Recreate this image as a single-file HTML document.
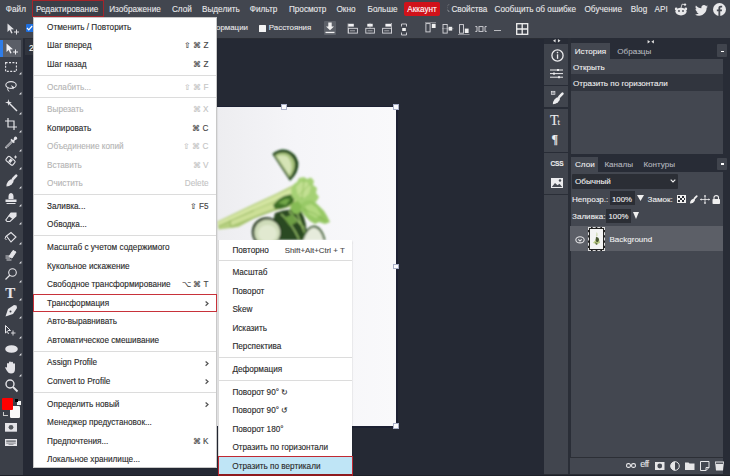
<!DOCTYPE html><html><head><meta charset="utf-8"><style>
*{margin:0;padding:0;box-sizing:border-box}
html,body{width:730px;height:476px;overflow:hidden;background:#252934;font-family:"Liberation Sans",sans-serif;position:relative}
.a{position:absolute}
.t{position:absolute;white-space:nowrap;line-height:1;-webkit-text-stroke:0.1px currentColor}
.mb{font-size:8.2px;color:#e8e8ea;-webkit-text-stroke:0.1px currentColor}
.menu{position:absolute;background:#fff;box-shadow:0.5px 0.5px 1.5px rgba(0,0,0,.18)}
.mi{position:relative;height:18.5px;line-height:18.5px;font-size:8.2px;color:#2a2a2a;-webkit-text-stroke:0.12px currentColor;padding-left:13.6px;white-space:nowrap}
.mi.d{color:#b4b4b4}
.mi .k{position:absolute;right:7px;top:0;color:#444}
.mi.d .k{color:#c4c4c4}
.sep{height:4.2px;position:relative}
.sep:after{content:"";position:absolute;left:0;right:0;top:0.4px;height:1px;background:#dcdcdc}
svg{position:absolute;overflow:visible}
.s2:after{top:0px}
</style></head><body>
<div class="a" style="left:0;top:0;width:730px;height:38px;background:#42464f"></div>
<div class="a" style="left:0;top:37.5px;width:730px;height:1px;background:#2a2d34"></div>
<div class="a" style="left:32px;top:0;width:72px;height:17px;border:1.3px solid #a3242a;border-top-width:1px;background:#3b3f48"></div>
<div class="t mb" style="left:5.8px;top:5.6px">Файл</div>
<div class="t mb" style="left:35.9px;top:5.6px">Редактирование</div>
<div class="t mb" style="left:109.2px;top:5.6px">Изображение</div>
<div class="t mb" style="left:171.9px;top:5.6px">Слой</div>
<div class="t mb" style="left:202px;top:5.6px">Выделить</div>
<div class="t mb" style="left:249.7px;top:5.6px">Фильтр</div>
<div class="t mb" style="left:288.9px;top:5.6px">Просмотр</div>
<div class="t mb" style="left:336.5px;top:5.6px">Окно</div>
<div class="t mb" style="left:367.6px;top:5.6px">Больше</div>
<div class="a" style="left:404.2px;top:2.4px;width:35.4px;height:13.7px;background:#d0121a;border-radius:2px"></div>
<div class="t mb" style="left:407.2px;top:5.6px;color:#fff">Аккаунт</div>
<svg style="left:445.5px;top:4.2px" width="4" height="8" viewBox="0 0 4 8"><path d="M3.8 0.2 A4 4 0 0 0 3.8 7.8 A2.6 3.8 0 0 1 3.8 0.2 Z" fill="#e8e8ea"/></svg>
<div class="t mb" style="left:451.4px;top:5.6px">Свойства</div>
<div class="t mb" style="left:494.5px;top:5.6px">Сообщить об ошибке</div>
<div class="t mb" style="left:584.5px;top:5.6px">Обучение</div>
<div class="t mb" style="left:630.8px;top:5.6px">Blog</div>
<div class="t mb" style="left:654.6px;top:5.6px">API</div>
<svg style="left:674px;top:3px" width="14" height="13" viewBox="0 0 14 13">
<ellipse cx="7" cy="8.6" rx="5.6" ry="3.8" fill="#e8e8ea"/>
<circle cx="2.2" cy="6" r="1.4" fill="#e8e8ea"/><circle cx="11.8" cy="6" r="1.4" fill="#e8e8ea"/>
<circle cx="11" cy="1.6" r="1.2" fill="#e8e8ea"/>
<path d="M7 5 L8 1.2 L11 1.6" stroke="#e8e8ea" stroke-width="0.8" fill="none"/>
<circle cx="5" cy="8" r="0.9" fill="#464a52"/><circle cx="9" cy="8" r="0.9" fill="#464a52"/>
</svg>
<svg style="left:694.5px;top:4.8px" width="13" height="11" viewBox="0 0 24 20">
<path fill="#e8e8ea" d="M24 2.4c-.9.4-1.8.6-2.8.8 1-.6 1.8-1.6 2.2-2.7-1 .6-2 1-3.1 1.2C19.4.7 18.1 0 16.6 0c-2.7 0-4.9 2.2-4.9 4.9 0 .4 0 .8.1 1.1C7.7 5.8 4.1 3.9 1.7.9c-.4.7-.7 1.6-.7 2.5 0 1.7.9 3.2 2.2 4.1-.8 0-1.6-.2-2.2-.6v.1c0 2.4 1.7 4.4 3.9 4.8-.4.1-.8.2-1.3.2-.3 0-.6 0-.9-.1.6 2 2.4 3.4 4.6 3.4-1.7 1.3-3.8 2.1-6.1 2.1-.4 0-.8 0-1.2-.1 2.2 1.4 4.8 2.2 7.5 2.2 9.1 0 14-7.5 14-14v-.6c1-.7 1.8-1.6 2.5-2.5z"/>
</svg>
<svg style="left:712.5px;top:3px" width="13" height="13" viewBox="0 0 24 24">
<circle cx="12" cy="12" r="12" fill="#e8e8ea"/>
<path fill="#464a52" d="M13.4 24v-8.6h2.9l.4-3.4h-3.3V9.9c0-1 .3-1.6 1.7-1.6h1.8v-3c-.3 0-1.4-.1-2.6-.1-2.6 0-4.3 1.6-4.3 4.4V12H7.1v3.4H10V24z"/>
</svg>
<svg style="left:7px;top:23px" width="13" height="12" viewBox="0 0 13 12">
<path d="M0.5 0.5 L0.5 9 L2.6 7 L4.3 10.6 L5.6 10 L4 6.5 L7 6.3 Z" fill="#e0e0e4"/>
<path d="M9.5 6.5 V11.5 M7 9 H12" stroke="#e0e0e4" stroke-width="1"/>
</svg>
<div class="a" style="left:25.5px;top:24px;width:8px;height:8px;background:#1e6fe0;border-radius:1px"></div>
<svg style="left:26px;top:25px" width="7" height="6" viewBox="0 0 7 6"><path d="M1 3 L2.8 4.8 L6.2 1" stroke="#fff" stroke-width="1.2" fill="none"/></svg>
<div class="t mb" style="left:148.8px;top:24.4px;font-size:7.9px">Элементы трансформации</div>
<div class="a" style="left:259px;top:25.3px;width:7px;height:7px;background:#f4f4f4;border-radius:0.5px"></div>
<div class="t mb" style="left:268.8px;top:24.4px;font-size:7.9px">Расстояния</div>
<div class="a" style="left:323.7px;top:20.7px;width:12.5px;height:14.4px;background:#5c6068;border-radius:1px"></div>
<svg style="left:325px;top:22px" width="10" height="12" viewBox="0 0 10 12">
<path d="M3.3 0.5 H6.7 V4.5 H9 L5 8.3 L1 4.5 H3.3 Z" fill="#f0f0f0"/><rect x="0.5" y="9.8" width="9" height="1.3" fill="#f0f0f0"/></svg>
<svg style="left:346.5px;top:22px" width="11" height="12" viewBox="0 0 11 12">
<rect x="1.2" y="1.8" width="5.6" height="2.8" fill="#f2f2f4"/><rect x="0.6" y="1.5" width="0.8" height="10" fill="#d8d8dc" opacity=".7"/>
<rect x="1.4" y="6.3" width="9" height="4.8" fill="none" stroke="#d8d8dc" stroke-width="0.9"/><rect x="3" y="8" width="5" height="1.4" fill="#d8d8dc" opacity=".45"/></svg>
<svg style="left:365.2px;top:22px" width="11" height="12" viewBox="0 0 11 12">
<rect x="2.3" y="1.8" width="5.4" height="2.8" fill="#f2f2f4"/><rect x="4.6" y="0.8" width="0.8" height="11" fill="#d8d8dc" opacity=".6"/>
<rect x="0.8" y="6.3" width="8.6" height="4.8" fill="#42464f" stroke="#d8d8dc" stroke-width="0.9"/><rect x="2.6" y="8" width="5" height="1.4" fill="#d8d8dc" opacity=".45"/></svg>
<svg style="left:382.4px;top:22px" width="11" height="12" viewBox="0 0 11 12">
<rect x="3.4" y="1.8" width="5.6" height="2.8" fill="#f2f2f4"/><rect x="9" y="1" width="0.9" height="10.5" fill="#d8d8dc" opacity=".8"/>
<rect x="0.6" y="6.3" width="8.8" height="4.8" fill="none" stroke="#d8d8dc" stroke-width="0.9"/><rect x="2.2" y="8" width="5" height="1.4" fill="#d8d8dc" opacity=".45"/></svg>
<svg style="left:401.2px;top:22.5px" width="6" height="13" viewBox="0 0 6 13">
<path d="M0.5 1 H5.5 M0.5 1 V3.5 M5.5 1 V3.5 M0.5 12 H5.5 M0.5 12 V9.5 M5.5 12 V9.5" stroke="#d8d8dc" stroke-width="0.9" fill="none"/><rect x="1.2" y="5" width="3.6" height="3" fill="#f0f0f0"/></svg>
<svg style="left:424.5px;top:22.3px" width="12" height="11" viewBox="0 0 12 11">
<rect x="0" y="0" width="11" height="0.8" fill="#d8d8dc" opacity=".55"/><rect x="0.9" y="1.6" width="4.2" height="8.3" fill="none" stroke="#d8d8dc" stroke-width=".9"/><rect x="6.8" y="1.8" width="3.8" height="4.2" fill="#f0f0f0"/></svg>
<svg style="left:441.5px;top:23.5px" width="12" height="10" viewBox="0 0 12 10">
<rect x="1" y="0.5" width="4.2" height="8.6" fill="none" stroke="#d8d8dc" stroke-width=".9"/><rect x="6.6" y="2.8" width="3.6" height="3.8" fill="#f0f0f0"/><rect x="0" y="4.3" width="11.5" height=".8" fill="#d8d8dc" opacity=".5"/></svg>
<svg style="left:458.3px;top:24px" width="12" height="11" viewBox="0 0 12 11">
<rect x="1.5" y="0.6" width="4" height="8.6" fill="none" stroke="#d8d8dc" stroke-width=".9"/><rect x="6.8" y="4.6" width="3.8" height="4.4" fill="#f0f0f0"/><rect x="0" y="10" width="11.5" height=".9" fill="#d8d8dc" opacity=".55"/></svg>
<svg style="left:475.2px;top:26px" width="12" height="6" viewBox="0 0 12 6">
<path d="M0.3 0.6 H2 V5.4 H0.3 M11.7 0.6 H10 V5.4 H11.7" stroke="#d8d8dc" stroke-width=".9" fill="none"/><rect x="4" y="0.6" width="4" height="4.8" fill="none" stroke="#d8d8dc" stroke-width=".9"/></svg>
<div class="a" style="left:494px;top:30px;width:6.5px;height:1px;background:#d8d8dc;opacity:.8"></div>
<svg style="left:516px;top:22.8px" width="12.5" height="12" viewBox="0 0 12.5 12">
<rect x="0.7" y="0.7" width="11" height="10.6" fill="none" stroke="#f0f0f0" stroke-width="1.3"/><path d="M6.2 0.7 V11.3 M0.7 6 H11.7" stroke="#f0f0f0" stroke-width="1.3"/></svg>
<div class="a" style="left:0;top:38px;width:22.8px;height:438px;background:#3b3f48"></div>
<div class="a" style="left:0;top:40px;width:3px;height:17px;background:#2f7de8"></div>
<div class="a" style="left:3px;top:40px;width:17.5px;height:17px;background:#5a5e67"></div>
<div class="a" style="left:24.8px;top:39.3px;width:10px;height:15.3px;background:#30343d"></div>
<div class="t" style="left:29px;top:43.6px;font-size:8.4px;color:#fff">2</div>
<div class="a" style="left:172px;top:107px;width:224px;height:319px;background:#f3f3f6"></div>
<div class="a" style="left:170.5px;top:105.5px;width:227px;height:322px;background:#1c2032"></div>
<svg style="left:172px;top:107px" width="224" height="319" viewBox="172 107 224 319">
<defs><filter id="bl" x="-10%" y="-10%" width="120%" height="120%"><feGaussianBlur stdDeviation="0.8"/></filter>
<linearGradient id="bg" x1="0" x2="1" y1="0" y2="0"><stop offset="0" stop-color="#e8e8eb"/><stop offset="0.2" stop-color="#ededf0"/><stop offset="0.55" stop-color="#f5f5f8"/><stop offset="1" stop-color="#f9f9fb"/></linearGradient></defs>
<rect x="172" y="107" width="224" height="319" fill="url(#bg)"/>
<g filter="url(#bl)">
<!-- wedge -->
<path d="M272.3 154 Q279 148 287 150 Q296 153 298.3 162.5 Q299.3 172 290 181 Z" fill="#1f4518"/>
<path d="M274.8 155.2 Q280 151.4 286.4 153 Q293 155.6 294.8 163 Q295.6 170.5 289.6 177.6 Z" fill="#a9c47e"/>
<path d="M276.8 156.3 Q282 154 287.3 156.5 Q291.5 161 291.5 167 Q291 172.5 289.3 175 Z" fill="#d6e4b6"/>
<!-- stalks -->
<path d="M217.3 221.6 L253.8 204 L276.5 193.5 L294.2 184.5 L299 187 L301 203 L294.2 206 L274 211 L253.8 218.5 L238.7 227 L218.5 229.4 Z" fill="#b5cf7f"/>
<path d="M217.5 222.5 L253.8 205.5 L294 187 L295.5 192 L254 209.5 L219 226 Z" fill="#d4e5a2"/>
<path d="M230 221 L262 207.5 L297 194 L298.5 199 L262 213 L231 225.5 Z" fill="#cde098"/>
<path d="M230 220.4 L231.1 227.3 M232 227 L262 214.5 L299 201 M219 225.8 L254 210.5" stroke="#8dae55" stroke-width="0.8" fill="none"/>
<!-- dark interior -->
<path d="M275 213 Q288 207 301 211 Q308 222 306 240 L274 240 Q271 226 275 213 Z" fill="#2c4a22"/>
<path d="M281 214 Q291 222 299 239 M289 211 L304 228 M296 210 Q300 222 306 236" stroke="#9cc66c" stroke-width="1.3" fill="none"/>
<path d="M284 218 L293 214 L297 222 L290 226 Z" fill="#6e9f45"/>
<!-- mid leaves (dark sprigs) -->
<path d="M273 205 L279 199 L284 196 L290 194.5 L295 197 L293 203 L287 207 L280 209 L275 209 Z" fill="#3d6e27"/>
<path d="M278 203 L285 199 L290 199 L286 205 Z" fill="#73a848"/>
<!-- celery leaves -->
<path d="M291 190 L294 184 L297 182 L299 178 L304 177 L307 179 L311 177.5 L314 181 L313 185 L317 188 L316 193 L319 197 L316 202 L311 204 L306 203 L301 205 L296 201 L292 197 Z" fill="#a5d174"/>
<path d="M296 187 L301 182 L307 182 L311 187 L309 194 L304 198 L298 196 Z" fill="#c2e092"/>
<path d="M298 196 Q304 190 310 184 M302 199 Q303 190 304 180" stroke="#7fb24c" stroke-width="0.6" fill="none"/>
<path d="M300 205 L305 201 L311 200 L316 203 L320 207 L324 211 L327 216 L330 222 L325 224 L319 222 L315 224 L310 221 L305 216 L301 211 Z" fill="#98c966"/>
<path d="M305 206 L311 204 L317 208 L321 215 L316 218 L309 214 Z" fill="#b3da80"/>
<path d="M303 209 Q314 212 326 221" stroke="#6fa340" stroke-width="0.6" fill="none"/>
<path d="M292 203 L298 201 L302 206 L300 213 L294 214 L290 209 Z" fill="#86bc55"/>
<!-- round slice -->
<circle cx="266.5" cy="232" r="14.7" fill="#1d3516"/>
<circle cx="267.2" cy="232.4" r="13" fill="#cfdcba"/>
<ellipse cx="267.5" cy="233.5" rx="9.5" ry="8.5" fill="#e1e9d0"/>
<!-- right slice -->
<path d="M301.5 240 Q305 227 313.5 225.5 Q322 225.5 325.5 240 Z" fill="#3a5e2c"/>
<path d="M303.5 240 Q307 229 313.5 227.5 Q320.5 228 323.5 240 Z" fill="#e6ebdc"/>
</g>
</svg>
<div class="a" style="left:281.2px;top:104.2px;width:5.6px;height:5.6px;background:#fbfbfd;border:0.7px solid #aab0c8"></div>
<div class="a" style="left:393.2px;top:104.2px;width:5.6px;height:5.6px;background:#fbfbfd;border:0.7px solid #aab0c8"></div>
<div class="a" style="left:393.2px;top:263.7px;width:5.6px;height:5.6px;background:#fbfbfd;border:0.7px solid #aab0c8"></div>
<div class="a" style="left:393.2px;top:423.2px;width:5.6px;height:5.6px;background:#fbfbfd;border:0.7px solid #aab0c8"></div>
<div class="a" style="left:544.4px;top:38px;width:185.6px;height:438px;background:#282c36"></div>
<div class="a" style="left:544.4px;top:195px;width:23.6px;height:281px;background:#41454e"></div>
<div class="a" style="left:544.4px;top:194px;width:23.6px;height:1px;background:#2a2e37"></div>
<div class="a" style="left:568px;top:38px;width:2.5px;height:438px;background:#2a2e37"></div>
<div class="a" style="left:544.4px;top:43.6px;width:23.6px;height:41.1px;background:#40444d"></div>
<div class="a" style="left:544.4px;top:86.4px;width:23.6px;height:20.4px;background:#40444d"></div>
<div class="a" style="left:544.4px;top:108.5px;width:23.6px;height:43.1px;background:#40444d"></div>
<div class="a" style="left:544.4px;top:153.3px;width:23.6px;height:40.7px;background:#40444d"></div>
<div class="a" style="left:571px;top:43px;width:39.3px;height:16.3px;background:#434750"></div>
<div class="t" style="left:574.8px;top:47.8px;font-size:8.1px;color:#f0f0f0">История</div>
<div class="t" style="left:617.3px;top:47.8px;font-size:8.1px;color:#b4b7be">Образцы</div>
<div class="a" style="left:570.5px;top:59.3px;width:152.5px;height:95px;background:#434750"></div>
<div class="t" style="left:573px;top:63.8px;font-size:8.1px;color:#f0f0f0">Открыть</div>
<div class="a" style="left:570.5px;top:73.8px;width:152.5px;height:17.7px;background:#31353e"></div>
<div class="t" style="left:573px;top:79.5px;font-size:8.1px;color:#f0f0f0">Отразить по горизонтали</div>
<div class="a" style="left:717.4px;top:44.2px;width:10.1px;height:13.2px;background:#40444d;border-radius:1px"></div>
<div class="a" style="left:720.5px;top:50.7px;width:3.8px;height:1.6px;background:#fff"></div>
<svg style="left:553px;top:39.3px" width="7.5" height="3.6" viewBox="0 0 7.5 3.6"><path d="M0 1.8 L2.6 0 V3.6 Z M7.5 1.8 L4.9 0 V3.6 Z" fill="#e0e0e0"/></svg>
<svg style="left:646.6px;top:39.5px" width="7.5" height="3.6" viewBox="0 0 7.5 3.6"><path d="M3.2 1.8 L0.6 0 V3.6 Z M4.3 1.8 L6.9 0 V3.6 Z" fill="#e0e0e0"/></svg>
<div class="a" style="left:571px;top:157.2px;width:26.8px;height:14.5px;background:#434750"></div>
<div class="t" style="left:575px;top:161.2px;font-size:8.1px;color:#f0f0f0">Слои</div>
<div class="t" style="left:604.4px;top:161.2px;font-size:8.1px;color:#b4b7be">Каналы</div>
<div class="t" style="left:643.4px;top:161.2px;font-size:8.1px;color:#b4b7be">Контуры</div>
<div class="a" style="left:570.5px;top:171.5px;width:152.5px;height:285px;background:#434750"></div>
<div class="a" style="left:717.4px;top:157.6px;width:10.1px;height:12.6px;background:#40444d;border-radius:1px"></div>
<div class="a" style="left:720.5px;top:163.2px;width:3.8px;height:1.6px;background:#fff"></div>
<div class="a" style="left:572px;top:174.4px;width:106px;height:14.3px;background:#2b2e35;border-radius:1px"></div>
<div class="t" style="left:575px;top:178px;font-size:8.1px;color:#f0f0f0">Обычный</div>
<svg style="left:670px;top:179px" width="6" height="4" viewBox="0 0 6 4"><path d="M0.7 0.7 L3 3 L5.3 0.7" stroke="#f0f0f0" stroke-width="1.1" fill="none"/></svg>
<div class="t" style="left:572px;top:195.5px;font-size:8.1px;color:#f0f0f0">Непрозр.:</div>
<div class="a" style="left:609.5px;top:190.9px;width:25.2px;height:14.3px;background:#2b2e35"></div>
<div class="t" style="left:612px;top:195.5px;font-size:7.8px;color:#f0f0f0">100%</div>
<svg style="left:636.7px;top:194.5px" width="7" height="6" viewBox="0 0 7 6"><path d="M0 0 H7 L3.5 6 Z" fill="#f0f0f0"/></svg>
<div class="t" style="left:647.6px;top:195.5px;font-size:8.1px;color:#f0f0f0">Замок:</div>
<svg style="left:677.4px;top:195px" width="9" height="8" viewBox="0 0 9 8"><rect x="0" y="0" width="9" height="8" fill="#f0f0f0"/>
<rect x="1" y="1" width="2" height="2" fill="#2b2e35"/><rect x="5" y="1" width="2" height="2" fill="#2b2e35"/><rect x="3" y="3" width="2" height="2" fill="#2b2e35"/><rect x="7" y="3" width="1" height="2" fill="#2b2e35"/><rect x="1" y="5" width="2" height="2" fill="#2b2e35"/><rect x="5" y="5" width="2" height="2" fill="#2b2e35"/></svg>
<svg style="left:688.5px;top:194.5px" width="9" height="9" viewBox="0 0 13 13"><path d="M11.2 1.6 L8 5" stroke="#f0f0f0" stroke-width="2.6" stroke-linecap="round"/><path d="M8.6 5.6 Q9.2 8.4 6.6 10.5 Q4.2 12.4 1.4 12.4 Q1.3 9.6 3.2 7.3 Q5.2 5.0 8.0 5.0 Z" fill="#f0f0f0"/></svg>
<svg style="left:700px;top:194.5px" width="10" height="9" viewBox="0 0 10 9"><path d="M5 0 V9 M0.5 4.5 H9.5" stroke="#f0f0f0" stroke-width="0.8"/><path d="M5 0 L3.8 1.5 H6.2 Z M5 9 L3.8 7.5 H6.2 Z M0 4.5 L1.5 3.3 V5.7 Z M10 4.5 L8.5 3.3 V5.7Z" fill="#f0f0f0"/></svg>
<svg style="left:712px;top:194.5px" width="8.5" height="9" viewBox="0 0 8.5 9"><path d="M2 4 V2.6 Q2 0.6 4.25 0.6 Q6.5 0.6 6.5 2.6 V4" stroke="#f0f0f0" stroke-width="1.1" fill="none"/><rect x="0.5" y="4" width="7.5" height="5" rx="0.8" fill="#f0f0f0"/></svg>
<div class="t" style="left:572px;top:213px;font-size:8.1px;color:#f0f0f0">Заливка:</div>
<div class="a" style="left:606.2px;top:208.5px;width:24.7px;height:14.3px;background:#2b2e35"></div>
<div class="t" style="left:608.5px;top:213px;font-size:7.8px;color:#f0f0f0">100%</div>
<svg style="left:633.4px;top:212px" width="6" height="7" viewBox="0 0 6 7"><path d="M0 0 H6 L3 7 Z" fill="#f0f0f0"/></svg>
<div class="a" style="left:570.4px;top:226.2px;width:153px;height:25.2px;background:#5c5f67"></div>
<svg style="left:574.5px;top:235.8px" width="10" height="7.6" viewBox="0 0 10 7.6"><ellipse cx="5" cy="3.8" rx="4.2" ry="3.1" stroke="#e2e2e4" stroke-width="1.1" fill="none"/><path d="M3.3 3.3 L5 5 L6.7 3.3" stroke="#e2e2e4" stroke-width="1.1" fill="none"/></svg>
<div class="a" style="left:587.7px;top:227px;width:17.6px;height:23.5px;border:1.3px dashed #ddd;background:#222"></div>
<div class="a" style="left:590px;top:229.2px;width:13px;height:19.5px;background:#f4f4f4"></div>
<svg style="left:592px;top:231px" width="9" height="15" viewBox="0 0 9 15"><g opacity=".9"><path d="M4.5 1 Q6 2 5.5 4.5 L4 6 Z" fill="#c9d6a8"/><path d="M1 12 L5 7 L7 8 L8 12 L5 13 Z" fill="#b7c97a"/><path d="M4 6 Q7 6 7 9 Q6 12 4.5 11 Q3 9 4 6 Z" fill="#3a4a22"/><path d="M3 11 L6 13 L4 14 Z" fill="#52622e"/></g></svg>
<div class="t" style="left:609.5px;top:235.6px;font-size:8px;color:#f0f0f0">Background</div>
<div class="a" style="left:570.4px;top:456.5px;width:153px;height:1px;background:#2c2f36"></div>
<div class="a" style="left:570.4px;top:457.5px;width:153px;height:16.5px;background:#434750"></div>
<div class="a" style="left:544px;top:474px;width:186px;height:2px;background:#2a2d34"></div>
<svg style="left:625.7px;top:462px" width="10" height="7" viewBox="0 0 10 7"><rect x="0.6" y="1.6" width="3.8" height="3.8" rx="1.5" stroke="#e6e6e8" stroke-width="1.1" fill="none"/><rect x="5.6" y="1.6" width="3.8" height="3.8" rx="1.5" stroke="#e6e6e8" stroke-width="1.1" fill="none"/></svg>
<div class="t" style="left:640.3px;top:460.3px;font-size:9px;color:#e6e6e8;letter-spacing:-0.6px">eff</div>
<svg style="left:655.4px;top:461.5px" width="9.5" height="8" viewBox="0 0 9.5 8"><rect x="0" y="0" width="9.5" height="8" fill="#e6e6e8"/><circle cx="4.75" cy="4" r="2.4" fill="#474b54"/></svg>
<svg style="left:669.7px;top:460.5px" width="11" height="10" viewBox="0 0 11 10"><circle cx="5" cy="5" r="4.3" stroke="#e6e6e8" stroke-width="1" fill="none"/><path d="M5 0.7 A4.3 4.3 0 0 0 5 9.3 Z" fill="#e6e6e8"/></svg>
<svg style="left:685px;top:461.5px" width="9.5" height="8" viewBox="0 0 9.5 8"><path d="M0 0.5 H3.5 L4.5 1.5 H9.5 V8 H0 Z" fill="#e6e6e8"/></svg>
<svg style="left:699.8px;top:460.5px" width="9.5" height="10" viewBox="0 0 9.5 10"><path d="M0.5 0.5 H9 V6.5 L6 9.5 H0.5 Z M9 6.5 H6 V9.5" stroke="#e6e6e8" stroke-width="1" fill="none"/></svg>
<svg style="left:714.9px;top:460.5px" width="9" height="10" viewBox="0 0 9 10"><path d="M0 0.5 H9 L8 9.5 H1 Z" fill="#e6e6e8"/><rect x="1" y="1.5" width="7" height="1.4" fill="#474b54"/></svg>
<svg style="left:550.5px;top:48.5px" width="13" height="13" viewBox="0 0 13 13"><circle cx="6.5" cy="6.5" r="5.6" stroke="#ececee" stroke-width="1.3" fill="none"/><rect x="5.9" y="5.3" width="1.3" height="4.5" fill="#ececee"/><circle cx="6.5" cy="3.6" r="0.8" fill="#ececee"/></svg>
<svg style="left:550.3px;top:68.8px" width="13" height="10" viewBox="0 0 13 10"><path d="M0 1 H13 M0 4.6 H13 M0 8.2 H13" stroke="#ececee" stroke-width="1"/><rect x="7" y="0" width="2" height="2" fill="#ececee"/><rect x="3" y="3.6" width="2" height="2" fill="#ececee"/><rect x="8" y="7.2" width="2" height="2" fill="#ececee"/></svg>
<svg style="left:550.5px;top:90.5px" width="13" height="14" viewBox="0 0 13 14"><g transform="translate(0.5 1) scale(0.98)"><path d="M11.2 1.6 L8 5" stroke="#ececee" stroke-width="2.6" stroke-linecap="round"/><path d="M8.6 5.6 Q9.2 8.4 6.6 10.5 Q4.2 12.4 1.4 12.4 Q1.3 9.6 3.2 7.3 Q5.2 5.0 8.0 5.0 Z" fill="#ececee"/></g><rect x="0.3" y="0.3" width="3.6" height="3" fill="none" stroke="#ececee" stroke-width=".7"/><path d="M0.3 1.8 H3.9 M2.1 0.3 V3.3" stroke="#ececee" stroke-width=".5"/></svg>
<div class="t" style="left:550px;top:114px;font-family:'Liberation Serif';font-size:14px;color:#ececee">T<span style="font-size:9px;margin-left:-1px">t</span></div>
<div class="t" style="left:551.5px;top:132.5px;font-family:'Liberation Serif';font-size:12px;font-weight:bold;color:#ececee">&para;</div>
<div class="t" style="left:550.5px;top:161px;font-size:6.5px;font-weight:bold;color:#ececee;letter-spacing:-0.2px">CSS</div>
<svg style="left:551px;top:178px" width="12" height="10" viewBox="0 0 12 10"><rect x="0" y="0" width="12" height="10" fill="#ececee"/><path d="M0.8 9 L4 5 L6.5 7.2 L8.5 5.8 L11.2 9 Z" fill="#474b54"/><circle cx="9" cy="2.5" r="1.2" fill="#474b54"/></svg>
<svg style="left:5.5px;top:43px" width="13" height="12" viewBox="0 0 13 12"><path d="M0.5 0.5 L0.5 9 L2.6 7 L4.3 10.6 L5.6 10 L4 6.5 L7 6.3 Z" fill="#f0f0f4"/><path d="M9.5 6.5 V11.5 M7 9 H12" stroke="#f0f0f4" stroke-width="1"/></svg>
<svg style="left:5px;top:62px" width="12" height="10" viewBox="0 0 12 10"><rect x="0.6" y="0.6" width="10.8" height="8.8" fill="none" stroke="#e4e4e8" stroke-width="1.1" stroke-dasharray="2 1.4"/></svg>
<svg style="left:5px;top:81px" width="12" height="11" viewBox="0 0 12 11"><ellipse cx="6" cy="4" rx="5.2" ry="3.4" stroke="#e4e4e8" stroke-width="1.1" fill="none"/><path d="M3 6.5 Q2 9 4 10.5" stroke="#e4e4e8" stroke-width="1" fill="none"/><path d="M6 4 L8 8.5 L8.8 7 L10.5 7 Z" fill="#e4e4e8"/></svg>
<svg style="left:5px;top:99px" width="13" height="13" viewBox="0 0 13 13"><path d="M4 4 L12 12" stroke="#e4e4e8" stroke-width="1.4"/><path d="M3.5 0 L4.2 2.8 L7 3.5 L4.2 4.2 L3.5 7 L2.8 4.2 L0 3.5 L2.8 2.8Z" fill="#e4e4e8"/></svg>
<svg style="left:5px;top:118px" width="13" height="12" viewBox="0 0 13 12"><path d="M3 0 V9 H12 M0 3 H9 V12" stroke="#e4e4e8" stroke-width="1.2" fill="none"/></svg>
<svg style="left:5px;top:136px" width="12" height="13" viewBox="0 0 12 13"><path d="M8.3 5.2 L2 11.5 Q1 12.4 0.7 11.9 Q0.3 11.3 1.3 10.3 L7.3 4.3" stroke="#e4e4e8" stroke-width="1" fill="none"/><path d="M6 3.3 L9.3 6.6" stroke="#e4e4e8" stroke-width="1.8"/><path d="M7.6 4.6 L10 2.2 Q11.2 1 11.6 1.6 Q12 2.4 10.8 3.5 L8.6 5.8 Z" fill="#e4e4e8"/><circle cx="10.5" cy="2.2" r="1.6" fill="#e4e4e8"/></svg>
<svg style="left:5px;top:155px" width="13" height="12" viewBox="0 0 13 12"><rect x="1" y="3" width="9" height="5.5" rx="1.5" transform="rotate(40 5.5 5.75)" stroke="#e4e4e8" stroke-width="1.1" fill="none"/><rect x="4" y="4" width="3" height="3.5" fill="#e4e4e8" transform="rotate(40 5.5 5.75)"/><path d="M10.5 0.5 V3.5 M9 2 H12" stroke="#e4e4e8" stroke-width=".9"/></svg>
<svg style="left:5px;top:173.5px" width="13" height="13" viewBox="0 0 13 13"><path d="M11.2 1.6 L8 5" stroke="#e4e4e8" stroke-width="2.6" stroke-linecap="round"/><path d="M8.6 5.6 Q9.2 8.4 6.6 10.5 Q4.2 12.4 1.4 12.4 Q1.3 9.6 3.2 7.3 Q5.2 5.0 8.0 5.0 Z" fill="#e4e4e8"/></svg>
<svg style="left:5px;top:193px" width="12" height="11" viewBox="0 0 12 11"><path d="M3.5 6 Q3 0 6 0 Q9 0 8.5 6 Z" fill="#e4e4e8"/><rect x="0.5" y="6.5" width="11" height="2.5" fill="#e4e4e8"/><rect x="1.5" y="10" width="9" height="1" fill="#e4e4e8"/></svg>
<svg style="left:5px;top:212px" width="12" height="10" viewBox="0 0 12 10"><path d="M6 1 L11 1 L11 4 L5 9.5 L2 9.5 L0.8 8 Z" stroke="#e4e4e8" stroke-width="1.1" fill="none"/><path d="M6 1 L11 1 L11 4 L7.5 7 L3.5 4 Z" fill="#e4e4e8"/></svg>
<svg style="left:5px;top:231.5px" width="12" height="11" viewBox="0 0 12 11"><path d="M1.5 4 L6 0.5 L11 5 L6 10 Z" stroke="#e4e4e8" stroke-width="1.1" fill="none"/><path d="M1 4 Q-1 7 1.5 8" stroke="#e4e4e8" stroke-width="1" fill="none"/></svg>
<svg style="left:5px;top:249.5px" width="12" height="11" viewBox="0 0 12 11"><path d="M8 0.5 L11 2 L7 8 L4 6.5 Z" stroke="#e4e4e8" stroke-width="1" fill="#e4e4e8"/><path d="M0.5 6 H4 M0.5 8 H5 M1.5 10 H6.5" stroke="#e4e4e8" stroke-width="0.9"/></svg>
<svg style="left:5px;top:268px" width="12" height="12" viewBox="0 0 12 12"><circle cx="7.5" cy="4.5" r="3.8" stroke="#e4e4e8" stroke-width="1.1" fill="none"/><path d="M5 7 L0.5 11.5" stroke="#e4e4e8" stroke-width="1.3"/></svg>
<div class="t" style="left:5.2px;top:285.5px;font-family:'Liberation Serif';font-weight:bold;font-size:15px;color:#e4e4e8">T</div>
<svg style="left:5px;top:305px" width="12" height="12" viewBox="0 0 12 12"><path d="M11.5 0.5 L9 0 L3 4 L0.5 11.5 L8 9 L12 3 Z" fill="#e4e4e8"/><circle cx="5.5" cy="6.5" r="1" fill="#3b3f48"/></svg>
<svg style="left:5px;top:324.5px" width="12" height="11" viewBox="0 0 12 11"><path d="M0.5 0.5 V8 L2.3 6.3 L3.5 9 M0.5 0.5 L5.5 5.5 H2.8" stroke="#e4e4e8" stroke-width="1" fill="none"/><path d="M8 5.5 V10.5 M6 8 H10.5" stroke="#e4e4e8" stroke-width=".9"/></svg>
<svg style="left:4.5px;top:344.5px" width="13" height="8" viewBox="0 0 13 8"><ellipse cx="6.5" cy="4" rx="6.3" ry="3.8" fill="#e4e4e8"/></svg>
<svg style="left:5px;top:361px" width="12" height="13" viewBox="0 0 12 13"><path d="M2 7 V3 Q2 2 3 2 Q4 2 4 3 V1.5 Q4 0.5 5 0.5 Q6 0.5 6 1.5 V1.5 Q6 0.8 7 0.8 Q8 0.8 8 1.8 V3 Q8 2.2 9 2.2 Q10 2.2 10 3.2 V8 Q10 12.5 6 12.5 Q3.5 12.5 2 10 L0.3 7 Q0 6 1 6 Q1.5 6 2 7Z" fill="#e4e4e8"/></svg>
<svg style="left:5px;top:379px" width="13" height="13" viewBox="0 0 13 13"><circle cx="5" cy="5" r="4" stroke="#e4e4e8" stroke-width="1.4" fill="none"/><path d="M8 8 L12.5 12.5" stroke="#e4e4e8" stroke-width="1.8"/></svg>
<svg style="left:18.6px;top:72px" width="2.4" height="2.4" viewBox="0 0 2.4 2.4"><path d="M2.4 0 V2.4 H0 Z" fill="#e4e4e8"/></svg>
<svg style="left:18.6px;top:92px" width="2.4" height="2.4" viewBox="0 0 2.4 2.4"><path d="M2.4 0 V2.4 H0 Z" fill="#e4e4e8"/></svg>
<svg style="left:18.6px;top:112px" width="2.4" height="2.4" viewBox="0 0 2.4 2.4"><path d="M2.4 0 V2.4 H0 Z" fill="#e4e4e8"/></svg>
<svg style="left:18.6px;top:130px" width="2.4" height="2.4" viewBox="0 0 2.4 2.4"><path d="M2.4 0 V2.4 H0 Z" fill="#e4e4e8"/></svg>
<svg style="left:18.6px;top:148.5px" width="2.4" height="2.4" viewBox="0 0 2.4 2.4"><path d="M2.4 0 V2.4 H0 Z" fill="#e4e4e8"/></svg>
<svg style="left:18.6px;top:167px" width="2.4" height="2.4" viewBox="0 0 2.4 2.4"><path d="M2.4 0 V2.4 H0 Z" fill="#e4e4e8"/></svg>
<svg style="left:18.6px;top:186px" width="2.4" height="2.4" viewBox="0 0 2.4 2.4"><path d="M2.4 0 V2.4 H0 Z" fill="#e4e4e8"/></svg>
<svg style="left:18.6px;top:204px" width="2.4" height="2.4" viewBox="0 0 2.4 2.4"><path d="M2.4 0 V2.4 H0 Z" fill="#e4e4e8"/></svg>
<svg style="left:18.6px;top:222px" width="2.4" height="2.4" viewBox="0 0 2.4 2.4"><path d="M2.4 0 V2.4 H0 Z" fill="#e4e4e8"/></svg>
<svg style="left:18.6px;top:242px" width="2.4" height="2.4" viewBox="0 0 2.4 2.4"><path d="M2.4 0 V2.4 H0 Z" fill="#e4e4e8"/></svg>
<svg style="left:18.6px;top:260.5px" width="2.4" height="2.4" viewBox="0 0 2.4 2.4"><path d="M2.4 0 V2.4 H0 Z" fill="#e4e4e8"/></svg>
<svg style="left:18.6px;top:280px" width="2.4" height="2.4" viewBox="0 0 2.4 2.4"><path d="M2.4 0 V2.4 H0 Z" fill="#e4e4e8"/></svg>
<svg style="left:18.6px;top:298px" width="2.4" height="2.4" viewBox="0 0 2.4 2.4"><path d="M2.4 0 V2.4 H0 Z" fill="#e4e4e8"/></svg>
<svg style="left:18.6px;top:316px" width="2.4" height="2.4" viewBox="0 0 2.4 2.4"><path d="M2.4 0 V2.4 H0 Z" fill="#e4e4e8"/></svg>
<svg style="left:18.6px;top:335.5px" width="2.4" height="2.4" viewBox="0 0 2.4 2.4"><path d="M2.4 0 V2.4 H0 Z" fill="#e4e4e8"/></svg>
<svg style="left:18.6px;top:352.5px" width="2.4" height="2.4" viewBox="0 0 2.4 2.4"><path d="M2.4 0 V2.4 H0 Z" fill="#e4e4e8"/></svg>
<svg style="left:18.6px;top:374px" width="2.4" height="2.4" viewBox="0 0 2.4 2.4"><path d="M2.4 0 V2.4 H0 Z" fill="#e4e4e8"/></svg>
<div class="a" style="left:9.8px;top:406.3px;width:10.6px;height:11.6px;background:#fafafa;border-radius:1.2px"></div>
<div class="a" style="left:1.9px;top:398.3px;width:11.3px;height:11.4px;background:#f00;border-radius:1px"></div>
<div class="a" style="left:16.5px;top:401px;width:4px;height:4px;background:#f4f4f4"></div>
<div class="a" style="left:14.5px;top:398.5px;width:3.5px;height:3px;background:#000"></div>
<div class="a" style="left:3px;top:411.5px;width:4.5px;height:4.5px;border-left:1px solid #ccc;border-bottom:1px solid #ccc"></div>
<svg style="left:5px;top:423px" width="12" height="8.7" viewBox="0 0 12 8.7"><rect x="0" y="0" width="12" height="8.7" fill="#e4e4e8"/><circle cx="6" cy="4.35" r="2.4" fill="#55595f"/></svg>
<svg style="left:5px;top:438.7px" width="12" height="7" viewBox="0 0 12 7"><rect x="0" y="0" width="12" height="7" fill="#e4e4e8"/><rect x="1.2" y="1.5" width="9.6" height="1.2" fill="#55595f"/><rect x="1.2" y="3.6" width="9.6" height="1" fill="#55595f" opacity=".7"/><rect x="3.5" y="5" width="5" height="0.9" fill="#55595f" opacity=".6"/></svg>
<div class="a" style="left:0;top:474.6px;width:730px;height:1.4px;background:#1e2129"></div>
<div class="menu" style="left:32.5px;top:17px;width:184px;height:450.5px;padding-top:0.9px;border:0.5px solid #c8c8c8">
<div class="mi">Отменить / Повторить<span class="k"></span></div>
<div class="mi">Шаг вперед<span class="k">&#8679; &#8984; Z</span></div>
<div class="mi">Шаг назад<span class="k">&#8984; Z</span></div>
<div class="sep"></div>
<div class="mi d">Ослабить...<span class="k">&#8679; &#8984; F</span></div>
<div class="sep"></div>
<div class="mi d">Вырезать<span class="k">&#8984; X</span></div>
<div class="mi">Копировать<span class="k">&#8984; C</span></div>
<div class="mi d">Объединение копий<span class="k">&#8679; &#8984; C</span></div>
<div class="mi d">Вставить<span class="k">&#8984; V</span></div>
<div class="mi d">Очистить<span class="k">Delete</span></div>
<div class="sep"></div>
<div class="mi">Заливка...<span class="k">&#8679; F5</span></div>
<div class="mi">Обводка...<span class="k"></span></div>
<div class="sep"></div>
<div class="mi">Масштаб с учетом содержимого<span class="k"></span></div>
<div class="mi">Кукольное искажение<span class="k"></span></div>
<div class="mi">Свободное трансформирование<span class="k">&#8997; &#8984; T</span></div>
<div class="mi">Трансформация<svg style="right:6.9px;top:6.5px" width="3.6" height="5.2" viewBox="0 0 3.6 5.2"><path d="M0.6 0.5 L3 2.6 L0.6 4.7" stroke="#555" stroke-width="1.25" fill="none"/></svg></div>
<div class="mi">Авто-выравнивать<span class="k"></span></div>
<div class="mi">Автоматическое смешивание<span class="k"></span></div>
<div class="sep"></div>
<div class="mi">Assign Profile<svg style="right:6.9px;top:6.5px" width="3.6" height="5.2" viewBox="0 0 3.6 5.2"><path d="M0.6 0.5 L3 2.6 L0.6 4.7" stroke="#555" stroke-width="1.25" fill="none"/></svg></div>
<div class="mi">Convert to Profile<svg style="right:6.9px;top:6.5px" width="3.6" height="5.2" viewBox="0 0 3.6 5.2"><path d="M0.6 0.5 L3 2.6 L0.6 4.7" stroke="#555" stroke-width="1.25" fill="none"/></svg></div>
<div class="sep"></div>
<div class="mi">Определить новый<svg style="right:6.9px;top:6.5px" width="3.6" height="5.2" viewBox="0 0 3.6 5.2"><path d="M0.6 0.5 L3 2.6 L0.6 4.7" stroke="#555" stroke-width="1.25" fill="none"/></svg></div>
<div class="mi">Менеджер предустановок...<span class="k"></span></div>
<div class="mi">Предпочтения...<span class="k">&#8984; K</span></div>
<div class="mi">Локальное хранилище...<span class="k"></span></div>
</div>
<div class="a" style="left:32.5px;top:293.9px;width:184px;height:17.8px;border:1.4px solid #c8323a"></div>
<div class="menu" style="left:217.8px;top:239.7px;width:134.6px;height:240px;padding-top:2px;border-left:0.5px solid #ddd">
<div class="mi" style="padding-left:13.6px"><span>Повторно</span><span class="k" style="right:7.6px;color:#4a4a4a;font-size:7.9px">Shift+Alt+Ctrl + T</span></div>
<div class="sep s2"></div>
<div class="mi" style="padding-left:13.6px"><span>Масштаб</span><span class="k" style="right:7.6px;color:#4a4a4a;font-size:7.9px"></span></div>
<div class="mi" style="padding-left:13.6px"><span>Поворот</span><span class="k" style="right:7.6px;color:#4a4a4a;font-size:7.9px"></span></div>
<div class="mi" style="padding-left:13.6px"><span>Skew</span><span class="k" style="right:7.6px;color:#4a4a4a;font-size:7.9px"></span></div>
<div class="mi" style="padding-left:13.6px"><span>Исказить</span><span class="k" style="right:7.6px;color:#4a4a4a;font-size:7.9px"></span></div>
<div class="mi" style="padding-left:13.6px"><span>Перспектива</span><span class="k" style="right:7.6px;color:#4a4a4a;font-size:7.9px"></span></div>
<div class="sep s2"></div>
<div class="mi" style="padding-left:13.6px"><span>Деформация</span><span class="k" style="right:7.6px;color:#4a4a4a;font-size:7.9px"></span></div>
<div class="sep s2"></div>
<div class="mi" style="padding-left:13.6px"><span>Поворот 90&deg; &#8635;</span><span class="k" style="right:7.6px;color:#4a4a4a;font-size:7.9px"></span></div>
<div class="mi" style="padding-left:13.6px"><span>Поворот 90&deg; &#8634;</span><span class="k" style="right:7.6px;color:#4a4a4a;font-size:7.9px"></span></div>
<div class="mi" style="padding-left:13.6px"><span>Поворот 180&deg;</span><span class="k" style="right:7.6px;color:#4a4a4a;font-size:7.9px"></span></div>
<div class="mi" style="padding-left:13.6px"><span>Отразить по горизонтали</span><span class="k" style="right:7.6px;color:#4a4a4a;font-size:7.9px"></span></div>
<div class="mi" style="padding-left:13.6px"><span>Отразить по вертикали</span><span class="k" style="right:7.6px;color:#4a4a4a;font-size:7.9px"></span></div>
</div>
<div class="a" style="left:217.8px;top:456px;width:134.8px;height:20px;border:1.5px solid #c02a33;border-bottom:2.6px solid #8e1a1f;background:#bfe5f6"></div>
<div class="t" style="left:232.3px;top:462.9px;font-size:8.2px;color:#2a2a2a;-webkit-text-stroke:0.12px #2a2a2a">Отразить по вертикали</div>
</body></html>
